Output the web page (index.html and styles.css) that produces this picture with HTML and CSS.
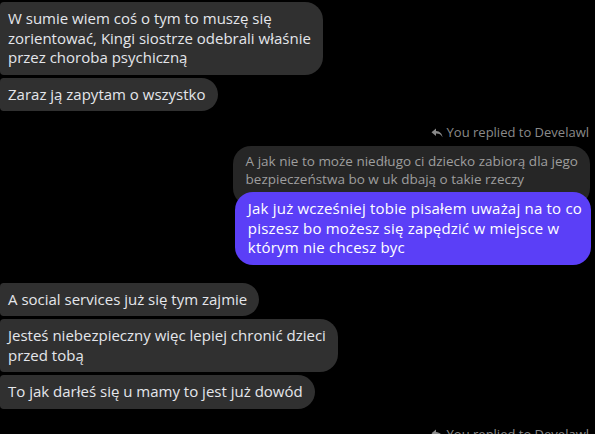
FILE: index.html
```html
<!DOCTYPE html>
<html lang="pl">
<head>
<meta charset="utf-8">
<link rel="stylesheet" href="styles.css">
</head>
<body>
<div class="chat">
  <div class="row in"><div class="bubble in first">W sumie wiem coś o tym to muszę się<br>zorientować, Kingi siostrze odebrali właśnie<br>przez choroba psychiczną</div></div>
  <div class="row in"><div class="bubble in">Zaraz ją zapytam o wszystko</div></div>

  <div class="reply-label">
    <svg class="reply-icon" viewBox="0 0 12 10" width="12" height="10"><path d="M5 0.5 L0.5 4.2 L5 8 L5 5.6 C8 5.5 10 6.4 11.5 9.2 C11.2 5.6 9 3.2 5 2.9 Z" fill="#8a8a8a"/></svg>
    <span>You replied to Develawl</span>
  </div>
  <div class="quote">A jak nie to może niedługo ci dziecko zabiorą dla jego<br>bezpieczeństwa bo w uk dbają o takie rzeczy</div>
  <div class="row out"><div class="bubble out">Jak już wcześniej tobie pisałem uważaj na to co<br>piszesz bo możesz się zapędzić w miejsce w<br>którym nie chcesz byc</div></div>

  <div class="row in gap-top"><div class="bubble in">A social services już się tym zajmie</div></div>
  <div class="row in"><div class="bubble in">Jesteś niebezpieczny więc lepiej chronić dzieci<br>przed tobą</div></div>
  <div class="row in"><div class="bubble in">To jak darłeś się u mamy to jest już dowód</div></div>

  <div class="reply-label bottom">
    <svg class="reply-icon" viewBox="0 0 12 10" width="12" height="10"><path d="M5 0.5 L0.5 4.2 L5 8 L5 5.6 C8 5.5 10 6.4 11.5 9.2 C11.2 5.6 9 3.2 5 2.9 Z" fill="#8a8a8a"/></svg>
    <span>You replied to Develawl</span>
  </div>
</div>
</body>
</html>
```

FILE: styles.css
```css
html, body {
  margin: 0;
  padding: 0;
  background: #000;
  height: 100%;
  overflow: hidden;
}
.chat {
  display: flex;
  flex-direction: column;
  padding: 2px 4px 0 0;
  font-family: "Open Sans", "Noto Sans", sans-serif;
  font-size: 15px;
  line-height: 19.5px;
  color: #e4e6eb;
}
.row {
  display: flex;
}
.row.in {
  justify-content: flex-start;
  margin-bottom: 3px;
}
.row.out {
  justify-content: flex-end;
  margin-top: -14px;
  position: relative;
}
.bubble {
  padding: 7px 12px 7px 8px;
  white-space: nowrap;
}
.bubble.in {
  background: #303030;
  border-radius: 4px 18px 18px 4px;
}
.bubble.out {
  background: #5b3ff7;
  color: #fff;
  border-radius: 18px;
  padding: 7px 9px 7px 13px;
  letter-spacing: 0.2px;
}
.reply-label {
  display: flex;
  justify-content: flex-end;
  align-items: center;
  gap: 4px;
  margin-top: 10px;
  font-size: 13px;
  line-height: 17px;
  color: #8a8a8a;
  padding-right: 2px;
}
.reply-label.bottom {
  margin-top: 14px;
}
.quote {
  align-self: flex-end;
  background: #262626;
  color: #9e9e9e;
  font-size: 13.5px;
  line-height: 18px;
  padding: 6px 12px 18px 13px;
  border-radius: 18px;
  margin-top: 5px;
  margin-right: 1px;
  white-space: nowrap;
}
.gap-top {
  margin-top: 18px;
}
```
